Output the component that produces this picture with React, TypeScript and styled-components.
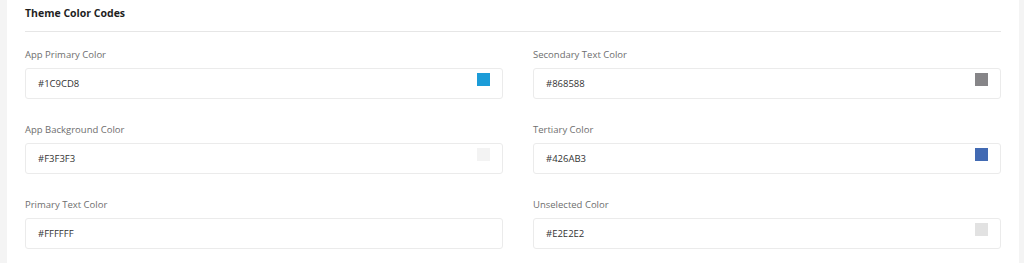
import React from 'react';
import styled, { createGlobalStyle } from 'styled-components';

const GlobalStyle = createGlobalStyle`
  html, body {
    margin: 0;
    padding: 0;
    background: #f4f4f4;
    font-family: "Open Sans", "Liberation Sans", sans-serif;
  }
`;

const Page = styled.div`
  width: 1024px;
  height: 263px;
  overflow: hidden;
  padding: 0 5px 0 7px;
  box-sizing: border-box;
`;

const Card = styled.div`
  background: #fff;
  padding: 0 18px 20px 18px;
  height: 100%;
  box-sizing: border-box;
`;

const Header = styled.div`
  height: 32px;
  border-bottom: 1px solid #e6e6e6;
  display: flex;
  align-items: center;
  padding-bottom: 6px;
  box-sizing: border-box;
`;

const Title = styled.h3`
  margin: 0;
  font-size: 10.5px;
  font-weight: 700;
  color: #1f1f1f;
`;

const Grid = styled.div`
  display: grid;
  grid-template-columns: 478fr 468fr;
  column-gap: 30px;
  row-gap: 24px;
  padding-top: 16px;
`;

const Field = styled.div`
  display: flex;
  flex-direction: column;
`;

const Label = styled.label`
  font-size: 9.5px;
  color: #6e6e6e;
  height: 14px;
  line-height: 14px;
  margin-bottom: 6px;
`;

const InputBox = styled.div`
  position: relative;
  height: 31px;
  border: 1px solid #ebebeb;
  border-radius: 3px;
  box-sizing: border-box;
  display: flex;
  align-items: center;
  padding: 0 12px;
  font-size: 9.5px;
  color: #333;
`;

const Swatch = styled.span<{ color: string }>`
  position: absolute;
  top: 4px;
  right: 12px;
  width: 13px;
  height: 13px;
  background: ${({ color }) => color};
`;

const colors = [
  { label: 'App Primary Color', value: '#1C9CD8' },
  { label: 'Secondary Text Color', value: '#868588' },
  { label: 'App Background Color', value: '#F3F3F3' },
  { label: 'Tertiary Color', value: '#426AB3' },
  { label: 'Primary Text Color', value: '#FFFFFF' },
  { label: 'Unselected Color', value: '#E2E2E2' },
];

const App: React.FC = () => (
  <>
    <GlobalStyle />
    <Page>
      <Card>
        <Header>
          <Title>Theme Color Codes</Title>
        </Header>
        <Grid>
          {colors.map(c => (
            <Field key={c.label}>
              <Label>{c.label}</Label>
              <InputBox>
                {c.value}
                <Swatch color={c.value} />
              </InputBox>
            </Field>
          ))}
        </Grid>
      </Card>
    </Page>
  </>
);

export default App;
